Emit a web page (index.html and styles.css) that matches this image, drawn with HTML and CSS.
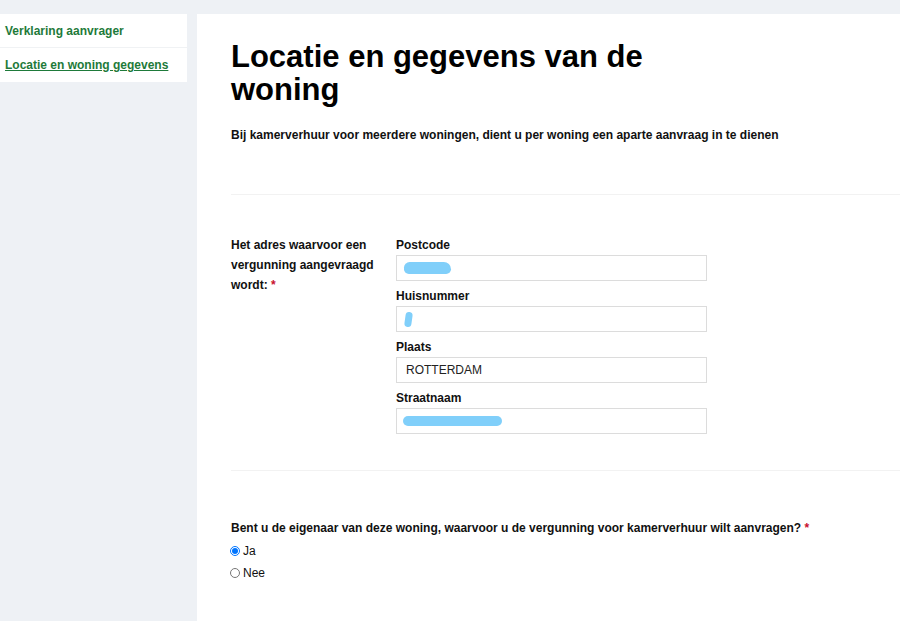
FILE: index.html
```html
<!DOCTYPE html>
<html lang="nl">
<head>
    <meta charset="UTF-8">
    <title>Locatie en gegevens van de woning</title>
    <link rel="stylesheet" href="styles.css">
</head>
<body>
    <div class="page">
        <div class="sidebar">
            <ul class="steps">
                <li><a href="#">Verklaring aanvrager</a></li>
                <li class="current"><a href="#">Locatie en woning gegevens</a></li>
            </ul>
        </div>
        <div class="content">
            <h1>Locatie en gegevens van de woning</h1>
            <p class="intro">Bij kamerverhuur voor meerdere woningen, dient u per woning een aparte aanvraag in te dienen</p>

            <hr class="divider">

            <div class="form-row">
                <div class="row-label required">Het adres waarvoor een vergunning aangevraagd wordt:</div>
                <div class="fields">
                    <label class="field-label">Postcode</label>
                    <div class="input"><span class="blob blob-postcode"></span></div>

                    <label class="field-label">Huisnummer</label>
                    <div class="input"><span class="blob blob-nummer"></span></div>

                    <label class="field-label">Plaats</label>
                    <div class="input">ROTTERDAM</div>

                    <label class="field-label">Straatnaam</label>
                    <div class="input"><span class="blob blob-straat"></span></div>
                </div>
            </div>

            <hr class="divider divider-low">

            <div class="question">
                <p class="question-label required">Bent u de eigenaar van deze woning, waarvoor u de vergunning voor kamerverhuur wilt aanvragen?</p>
                <label class="radio"><input type="radio" name="eigenaar" checked> Ja</label>
                <label class="radio"><input type="radio" name="eigenaar"> Nee</label>
            </div>
        </div>
    </div>
</body>
</html>
```

FILE: styles.css
```css
html, body {
    padding:0px;
    margin:0px;
    background: #eef1f5;
    font-family: "Liberation Sans", Arial, sans-serif;
    color: #111;
}

.page {
    display:flex;
    padding-top:14px;
    gap:10px;
    min-height:607px;
}

.sidebar {
    width:187px;
    flex-shrink:0;
}

.steps {
    list-style:none;
    margin:0px;
    padding:0px;
    background:white;
}

.steps li {
    height:33px;
    display:flex;
    align-items:center;
    padding-left:5px;
    border-bottom:1px solid #f0f2f4;
    font-size:12px;
    font-weight:bold;
}

.steps li:last-child {
    border-bottom:none;
    height:34px;
}

.steps a {
    color: #1e7a3a;
    text-decoration:none;
}

.steps .current a {
    text-decoration:underline;
}

.content {
    flex:1;
    background:white;
    padding:26px 0px 0px 34px;
}

h1 {
    font-size:31px;
    line-height:33px;
    margin:0px;
    max-width:440px;
    color:#000;
}

.intro {
    font-size:12px;
    font-weight:bold;
    margin:21px 0px 0px 0px;
    line-height:16px;
}

.divider {
    border:none;
    border-top:1px solid #f2f2f2;
    margin:51px 0px 0px 0px;
}

.divider-low {
    margin-top:22px;
}

.form-row {
    display:flex;
    margin-top:40px;
}

.row-label {
    width:165px;
    font-size:12px;
    font-weight:bold;
    line-height:20px;
    flex-shrink:0;
}

.required::after {
    content:" *";
    color:#c8102e;
}

.fields {
    width:311px;
    display:flex;
    flex-direction:column;
}

.field-label {
    font-size:12px;
    font-weight:bold;
    line-height:18px;
    margin-top:-8px;
    margin-bottom:1px;
}

.field-label:first-child {
    margin-top:1px;
}

.input {
    height:24px;
    border:1px solid #dcdcdc;
    margin-bottom:14px;
    display:flex;
    align-items:center;
    padding-left:9px;
    font-size:12px;
    color:#222;
}

.blob {
    display:inline-block;
    background:#80cffa;
    border-radius:8px;
}

.blob-postcode {
    width:47px;
    height:12px;
    margin-left:-2px;
    border-radius:7px 9px 6px 6px;
}

.blob-nummer {
    width:7px;
    height:15px;
    margin-left:-1px;
    border-radius:4px;
    transform:rotate(8deg);
}

.blob-straat {
    width:99px;
    height:10px;
    margin-left:-3px;
    border-radius:6px;
}

.question {
    margin-top:49px;
    font-size:12px;
}

.question-label {
    font-weight:bold;
    margin:0px 0px 4px 0px;
    line-height:16px;
}

.radio {
    display:flex;
    align-items:center;
    gap:3px;
    height:22px;
    font-size:12px;
}

.radio input {
    margin:0px 0px 0px -1px;
    width:10px;
    height:10px;
}
```
